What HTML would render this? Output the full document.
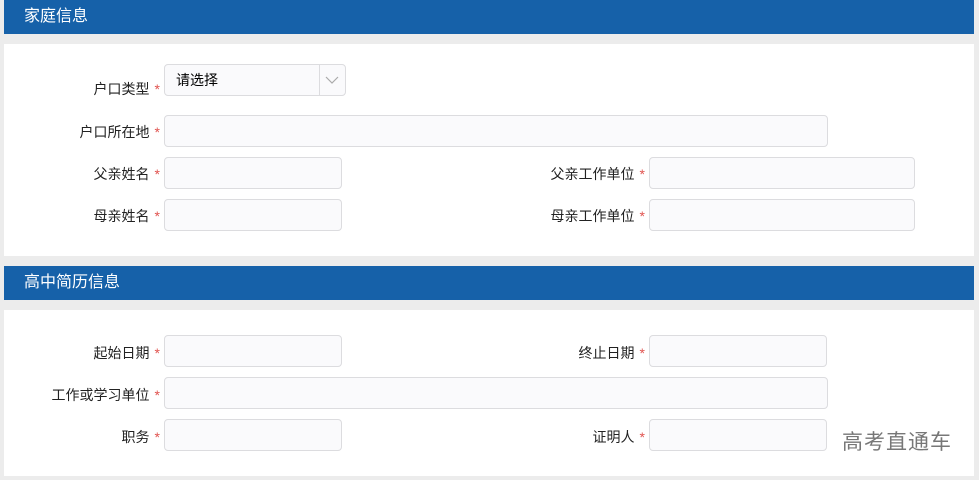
<!DOCTYPE html><html><head><meta charset="utf-8"><style>
body{margin:0;background:#ececec;width:979px;height:480px;position:relative;overflow:hidden;font-family:"Liberation Sans","Noto Sans CJK SC",sans-serif;}
.h{position:absolute;left:4px;width:970px;height:34px;background:#1661a9;color:#fff;font-size:16px;line-height:34px;box-sizing:border-box;padding-left:20px}
.p{position:absolute;left:4px;width:970px;background:#fff}
.l{position:absolute;font-size:14px;color:#222;text-align:right;width:200px;line-height:34px}
.l b{color:#e0524e;font-weight:normal;margin-left:5px}
.i{position:absolute;height:30px;border:1px solid #dcdcdf;border-radius:4px;background:#fafafc}
.w{position:absolute;left:842px;top:426px;font-size:21px;color:#777;letter-spacing:1px}
</style></head><body>
<div class="h" style="top:0">家庭信息</div>
<div class="p" style="top:44px;height:212px"></div>
<div class="h" style="top:266px">高中简历信息</div>
<div class="p" style="top:310px;height:166px"></div>

<div class="l" style="left:-40px;top:72px">户口类型<b>*</b></div>
<div class="i" style="left:164px;top:64px;width:180px;font-size:14px;line-height:30px"><span style="margin-left:11px">请选择</span><div style="position:absolute;right:0;top:0;width:25px;height:30px;border-left:1px solid #dcdcdf"><svg width="25" height="30"><path d="M6 12l6 6 6-6" fill="none" stroke="#aaa" stroke-width="1.2"/></svg></div></div>
<div class="l" style="left:-40px;top:115px">户口所在地<b>*</b></div>
<div class="i" style="left:164px;top:115px;width:662px"></div>
<div class="l" style="left:-40px;top:157px">父亲姓名<b>*</b></div>
<div class="i" style="left:164px;top:157px;width:176px"></div>
<div class="l" style="left:445px;top:157px">父亲工作单位<b>*</b></div>
<div class="i" style="left:649px;top:157px;width:264px"></div>
<div class="l" style="left:-40px;top:199px">母亲姓名<b>*</b></div>
<div class="i" style="left:164px;top:199px;width:176px"></div>
<div class="l" style="left:445px;top:199px">母亲工作单位<b>*</b></div>
<div class="i" style="left:649px;top:199px;width:264px"></div>

<div class="l" style="left:-40px;top:336px">起始日期<b>*</b></div>
<div class="i" style="left:164px;top:335px;width:176px"></div>
<div class="l" style="left:445px;top:336px">终止日期<b>*</b></div>
<div class="i" style="left:649px;top:335px;width:176px"></div>
<div class="l" style="left:-40px;top:378px">工作或学习单位<b>*</b></div>
<div class="i" style="left:164px;top:377px;width:662px"></div>
<div class="l" style="left:-40px;top:420px">职务<b>*</b></div>
<div class="i" style="left:164px;top:419px;width:176px"></div>
<div class="l" style="left:445px;top:420px">证明人<b>*</b></div>
<div class="i" style="left:649px;top:419px;width:176px"></div>
<div class="w">高考直通车</div>
</body></html>
